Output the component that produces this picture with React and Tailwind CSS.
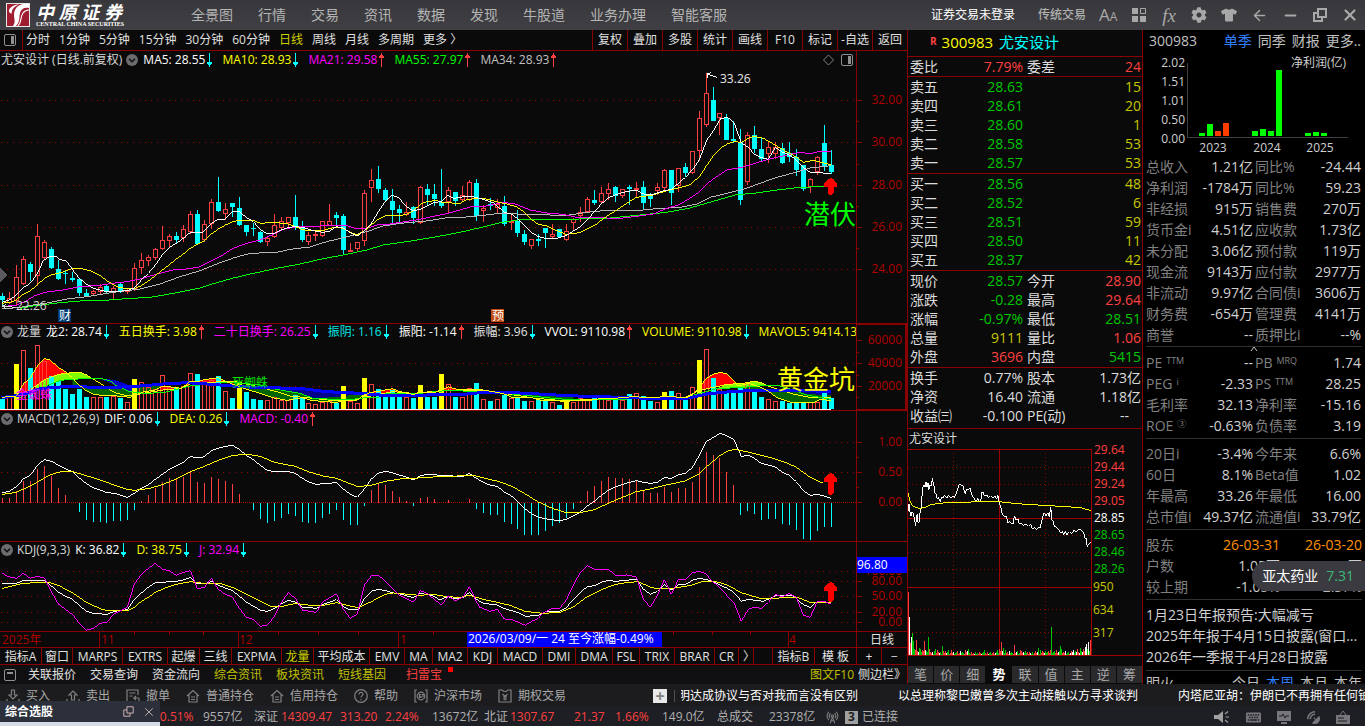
import React from "react";
import { FaCog, FaTshirt, FaKeyboard, FaSatelliteDish } from "react-icons/fa";
import { ArrowLeft, Minus, X, RadioTower } from "lucide-react";

/* ---------- data ---------- */

// kind, high, body top, body bottom, low
const CANDLES = `d 700 708 720 735;u 697 714 730 732;u 616 651 724 735;u 588 597 672 676;d 606 612 636 664;u 492 528 650 680;u 540 546 594 600;d 561 567 624 628;d 600 627 657 660;d 630 640 644 672;d 638 655 660 666;d 655 657 699 708;d 687 699 710 712;u 690 694 702 706;u 672 682 696 702;d 672 678 697 700;u 680 684 696 720;d 670 672 697 700;u 685 690 696 702;u 609 625 690 693;u 580 601 626 644;u 585 591 605 618;u 564 568 594 602;u 498 541 569 570;u 522 528 543 562;d 516 528 540 550;u 495 507 536 548;u 453 462 516 522;d 450 462 552 554;u 480 492 540 546;u 417 426 494 507;d 351 426 453 456;u 430 447 462 480;d 429 430 441 471;d 411 444 495 500;d 495 495 516 528;d 489 504 507 528;d 513 516 546 550;u 528 534 546 560;u 462 495 533 534;u 471 484 504 510;u 471 472 490 502;d 405 471 500 510;d 483 499 540 546;u 516 525 546 556;u 513 524 528 543;u 484 484 528 532;u 432 484 498 498;d 456 465 474 495;d 462 468 570 582;u 550 570 573 576;u 546 547 567 576;u 390 399 544 558;u 327 360 384 426;d 318 357 387 399;d 384 390 420 423;d 387 423 450 492;d 435 447 459 487;u 426 457 466 468;d 440 441 474 492;u 378 382 490 492;d 372 387 405 438;d 372 404 417 438;d 327 426 438 444;u 382 391 428 460;d 396 398 423 438;u 378 407 422 424;u 360 366 422 424;d 357 369 468 483;u 435 444 453 486;d 414 434 440 450;u 418 432 446 459;d 408 438 492 498;u 465 484 490 510;d 450 483 521 531;d 510 522 548 555;u 538 538 560 567;d 522 537 543 558;d 504 504 521 564;u 492 522 533 534;d 507 507 531 534;u 492 514 542 543;u 474 478 490 510;u 441 457 470 486;u 411 418 457 459;d 390 420 429 435;u 381 400 428 432;u 369 387 402 420;d 378 381 408 426;u 387 388 410 414;d 375 381 387 435;u 366 384 390 414;d 363 381 429 447;d 399 402 417 441;u 369 381 395 405;u 328 331 384 390;d 330 330 399 435;u 324 325 378 396;d 309 321 339 351;u 273 274 340 342;u 153 175 274 303;u 40 100 196 201;d 81 120 183 183;u 159 160 174 225;d 162 174 240 240;d 183 237 244 250;d 207 246 420 435;u 216 226 367 375;d 198 225 267 279;d 231 267 297 303;u 246 262 284 309;u 246 262 284 297;d 250 264 309 312;d 246 280 291 306;d 267 291 330 348;d 315 315 387 393;u 354 358 382 399;u 288 292 338 345;d 195 249 318 333;d 270 315 336 342`
  .split(";")
  .map((row) => {
    const [kind, ...v] = row.split(" ");
    return { kind, v: v.map(Number) };
  });

const VOLUMES =
  "c267 r262 y162 r121 c174 r106 r153 c200 c213 c237 c252 c237 c261 r262 r262 c263 r258 c265 r277 y207 r217 r232 r238 r196 r232 c236 r230 r190 c192 r214 r210 c198 r243 c264 y218 c246 c267 c270 r271 r262 r271 r271 c255 c265 r280 r283 r277 r275 c279 y228 r274 r280 y204 r223 c237 c258 c240 c262 r262 c265 y225 c262 c263 y192 r223 c263 r262 r236 c219 r268 c273 r268 c256 r266 c266 c273 r275 c270 c270 r278 c285 y267 r278 r266 r268 c262 r268 r270 c268 r272 c252 r250 c258 c273 r278 y246 c243 r250 c268 r232 y150 r118 c204 r238 c250 c250 c233 r220 c243 c261 r268 r273 c273 c279 c279 c279 r278 r278 c249 c264".split(" ");

const MACD_BARS = [
  565, 565, 544, 514, 514, 477, 468, 499, 535, 556, 577, 603, 627, 633, 633, 636, 630, 630, 627, 597, 573, 556, 535, 516, 504, 507, 501, 486, 516, 519, 501, 507, 514, 522, 552, 577, 597, 624, 636, 630, 621, 609, 615, 633, 636, 636, 621, 609, 597, 627, 642, 642, 585, 540, 523, 525, 544, 562, 573, 585, 565, 562, 568, 577, 571, 577, 577, 567, 594, 606, 612, 612, 633, 639, 654, 672, 674, 672, 660, 645, 636, 621, 594, 573, 544, 529, 514, 501, 504, 504, 507, 514, 540, 550, 550, 531, 547, 534, 534, 517, 472, 427, 436, 444, 487, 526, 612, 600, 609, 627, 624, 624, 639, 642, 657, 684, 687, 660, 648, 648,
];

const MA5 = "7,727 28,720 49,705 70,683 91,670 112,640 130,602 148,590 165,588 180,598 200,604 220,632 238,655 259,672 280,685 301,690 322,696 350,694 380,692 403,684 424,660 445,640 466,615 487,585 508,562 529,550 550,535 571,517 610,516 634,490 655,478 676,477 697,455 718,455 739,472 760,485 781,508 802,522 823,520 844,510 865,502 886,500 910,502 940,512 967,517 988,514 1009,500 1030,504 1051,518 1072,528 1093,512 1114,490 1135,455 1156,424 1177,405 1198,415 1219,440 1240,453 1261,448 1282,437 1303,427 1324,425 1342,406 1360,415 1408,408 1450,418 1480,428 1513,457 1534,462 1555,478 1576,500 1597,519 1615,530 1636,535 1670,535 1699,527 1720,513 1741,500 1762,480 1783,455 1804,432 1825,413 1846,405 1880,394 1909,391 1930,402 1960,403 1985,394 2014,388 2035,370 2056,352 2077,330 2098,300 2119,243 2140,212 2161,177 2182,172 2203,188 2212,215 2224,248 2245,262 2263,283 2284,293 2305,298 2326,262 2347,276 2368,285 2389,300 2410,322 2431,337 2452,336 2473,340 2494,341";
const MA10 = "7,730 40,725 70,703 91,692 112,675 133,655 154,645 185,637 217,625 245,626 270,632 301,647 322,663 350,680 380,686 403,686 424,677 445,663 466,647 487,630 508,614 529,597 550,582 571,565 592,553 613,542 634,522 655,507 676,495 697,486 718,481 760,481 781,490 823,487 865,492 886,500 907,508 930,513 967,513 988,506 1012,501 1030,506 1051,517 1072,524 1093,513 1114,494 1135,478 1156,467 1198,467 1219,463 1240,453 1261,433 1282,424 1310,422 1330,428 1380,430 1400,418 1450,415 1490,425 1520,432 1550,440 1576,459 1597,480 1615,493 1640,498 1670,512 1699,523 1740,518 1765,505 1790,492 1815,472 1846,453 1880,430 1909,412 1960,405 2000,392 2040,383 2070,374 2098,350 2119,318 2140,288 2161,265 2182,252 2203,244 2224,248 2245,235 2263,229 2290,235 2310,246 2340,264 2368,280 2389,291 2410,307 2440,301 2470,308 2494,315";
const MA21 = "7,740 50,735 80,722 105,707 140,696 190,690 240,680 300,676 345,669 380,665 430,655 470,642 520,630 560,627 597,621 630,605 660,590 697,566 740,550 780,540 822,522 850,508 890,500 950,499 985,495 1040,497 1065,505 1100,505 1130,495 1170,492 1215,485 1260,478 1305,468 1345,460 1380,450 1410,441 1460,438 1510,427 1545,432 1590,450 1640,459 1690,463 1730,472 1780,473 1860,475 1910,469 1960,462 2000,445 2035,435 2070,415 2098,396 2119,373 2150,350 2180,330 2230,321 2280,305 2330,292 2370,283 2400,277 2430,281 2460,274 2494,274";
const MA34 = "7,747 60,742 100,735 140,729 200,717 260,710 340,697 420,687 480,672 540,650 600,632 650,612 700,594 750,580 830,577 870,568 930,561 980,545 1030,533 1100,515 1150,498 1200,490 1280,483 1340,473 1400,471 1450,466 1500,460 1600,464 1700,466 1760,457 1800,453 1900,453 1960,447 2040,442 2090,432 2130,412 2180,400 2230,388 2280,370 2330,352 2380,339 2430,324 2494,317";
const MA55 = "60,745 100,738 180,728 240,723 300,722 380,716 450,712 520,700 600,684 640,671 700,654 760,640 830,625 900,612 960,598 1040,583 1100,570 1150,555 1220,545 1300,532 1380,517 1440,503 1500,488 1560,479 1640,478 1740,477 1830,474 1920,465 2000,457 2070,444 2140,424 2210,404 2260,400 2340,389 2400,382 2494,379";

const DIF = "7,548 28,544 49,530 70,507 91,496 112,466 133,449 154,454 175,465 196,476 217,485 238,504 259,521 280,533 301,540 319,547 350,552 382,562 403,550 424,535 445,524 466,508 487,493 508,478 529,468 550,457 571,439 592,444 613,440 634,422 655,415 676,409 697,406 718,418 739,436 760,449 781,466 802,481 823,485 865,485 886,490 907,505 928,517 949,523 1009,518 1030,537 1051,553 1072,562 1093,537 1114,507 1135,490 1156,484 1177,488 1198,495 1219,501 1240,510 1261,497 1285,493 1310,495 1345,496 1366,499 1390,499 1408,490 1429,505 1450,517 1471,526 1492,529 1513,546 1534,558 1555,576 1576,597 1597,613 1615,622 1640,627 1678,632 1699,628 1720,618 1741,606 1762,588 1783,574 1804,556 1825,541 1846,531 1867,523 1909,512 1930,517 1951,520 1972,517 1993,503 2014,505 2035,494 2056,490 2077,473 2098,436 2119,395 2140,382 2161,370 2182,378 2203,390 2212,412 2224,439 2245,436 2263,445 2284,460 2326,471 2347,487 2368,496 2389,515 2410,542 2431,556 2452,553 2473,558 2494,565";
const DEA = "7,553 49,547 91,528 133,504 154,493 185,485 217,485 259,497 301,510 350,528 382,538 403,541 445,536 487,524 529,507 571,485 613,469 655,451 697,437 739,432 781,439 823,457 886,469 928,486 970,498 1009,505 1040,517 1072,529 1110,527 1156,514 1200,507 1240,505 1300,501 1420,496 1460,506 1490,513 1534,528 1576,552 1615,576 1657,595 1699,608 1741,608 1783,599 1825,580 1867,562 1909,545 1951,537 1993,526 2056,513 2098,491 2119,471 2140,453 2161,436 2182,424 2203,418 2240,425 2284,436 2326,447 2368,462 2389,472 2431,502 2470,520";

const K_LINE = "7,130 50,130 70,121 133,121 150,134 175,157 196,168 217,178 238,196 259,214 280,220 320,223 345,214 382,209 403,178 424,159 445,142 466,128 529,124 550,120 571,113 592,132 613,132 634,124 655,136 697,152 718,168 739,187 760,198 781,211 802,214 823,206 844,192 865,181 886,186 907,201 949,205 970,193 1009,179 1030,200 1051,210 1075,210 1093,175 1114,154 1135,148 1156,152 1177,158 1200,162 1240,173 1261,160 1300,168 1320,180 1342,170 1365,176 1390,172 1408,157 1429,178 1450,190 1492,195 1513,206 1555,218 1576,229 1615,226 1636,216 1680,213 1699,203 1720,178 1741,157 1762,140 1783,137 1804,127 1825,121 1846,124 1910,118 1930,147 1951,163 1972,154 1993,133 2014,150 2035,134 2056,134 2077,121 2098,115 2130,121 2161,136 2182,145 2203,158 2224,184 2245,178 2290,184 2326,168 2380,168 2410,194 2431,202 2452,184 2494,190";
const D_LINE = "7,145 60,132 110,127 145,126 175,136 217,158 259,187 301,206 320,212 385,211 403,202 424,184 445,172 466,157 500,142 530,133 571,125 610,130 660,130 697,142 739,162 781,184 810,198 845,200 886,190 930,196 970,196 1009,188 1050,198 1075,203 1114,185 1156,163 1180,159 1260,166 1300,163 1340,170 1380,172 1408,166 1450,178 1492,187 1530,196 1576,214 1630,220 1680,217 1720,201 1762,170 1804,149 1846,133 1880,128 1915,125 1950,141 1972,146 2020,145 2077,135 2110,124 2145,124 2182,135 2224,158 2280,175 2320,175 2389,171 2431,187 2494,187";
const J_LINE = "7,100 25,110 49,115 70,100 91,115 112,109 133,114 154,155 175,192 196,208 217,223 238,250 259,271 280,265 301,250 320,246 345,220 382,202 403,132 424,103 445,85 466,70 487,88 508,92 529,106 550,97 571,92 592,145 613,143 634,115 655,148 676,163 697,171 718,205 739,232 760,238 781,259 802,255 823,230 844,188 865,158 886,175 907,210 949,217 967,187 1009,161 1030,208 1051,235 1072,222 1093,136 1114,108 1135,106 1156,123 1177,146 1198,166 1240,187 1261,152 1282,160 1300,176 1324,195 1345,168 1366,182 1390,170 1408,140 1429,184 1438,201 1471,214 1492,208 1513,237 1534,238 1576,256 1597,243 1615,235 1630,218 1655,206 1678,206 1699,180 1720,135 1741,98 1762,76 1783,88 1828,90 1846,106 1880,105 1909,111 1930,177 1951,202 1972,166 1993,119 2014,163 2035,119 2056,118 2077,98 2098,94 2119,102 2130,118 2160,143 2182,168 2203,190 2224,244 2245,208 2263,202 2284,205 2305,187 2326,163 2347,170 2368,160 2389,172 2410,225 2431,232 2452,184 2473,184 2494,193";

const V_FAST = "5,262 50,258 70,222 90,205 112,168 133,146 150,150 175,172 200,188 217,203 238,226 259,242 280,252 301,256 350,258 390,262 403,257 430,246 466,240 490,228 520,232 545,235 571,213 592,216 613,209 655,203 676,214 697,222 718,230 740,238 781,250 823,264 860,271 907,263 930,270 970,275 1010,277 1030,271 1072,271 1085,258 1110,248 1135,244 1177,236 1198,244 1240,254 1261,247 1303,248 1324,240 1345,230 1366,237 1400,240 1450,240 1480,245 1513,252 1540,264 1590,262 1620,270 1699,274 1760,268 1830,266 1900,260 1950,263 2010,259 2056,264 2077,255 2098,232 2119,205 2140,193 2161,187 2182,192 2203,215 2215,228 2245,220 2262,225 2284,232 2305,244 2330,262 2368,276 2410,278 2440,278 2460,268 2494,272";
const V_SLOW = "50,258 90,240 133,210 154,200 190,190 240,187 260,195 280,208 301,220 322,235 350,250 385,258 430,250 490,240 540,236 571,222 650,216 697,213 739,222 781,232 830,245 870,258 930,264 1000,272 1072,268 1114,258 1177,245 1240,250 1303,244 1345,240 1450,242 1510,250 1600,264 1699,273 1830,268 1950,262 2056,262 2098,242 2140,232 2182,223 2230,220 2262,214 2284,218 2305,228 2340,240 2380,252 2430,262 2494,262";
const V_GREEN = "60,262 100,245 133,230 170,215 200,208 301,205 330,212 350,228 390,245 430,250 490,248 571,228 640,220 700,217 780,225 830,238 900,250 940,265 1040,270 1090,264 1135,262 1160,250 1240,252 1345,241 1480,247 1560,254 1650,264 1720,270 1860,268 1990,262 2060,262 2100,250 2150,236 2230,232 2290,226 2340,228 2380,240 2420,255 2494,268";
const V_BLUE = "5,263 50,257 90,247 120,236 160,232 220,229 280,232 350,232 420,228 490,222 560,218 620,222 700,228 780,233 900,235 980,245 1080,250 1150,256 1240,258 1310,253 1380,254 1450,247 1520,247 1600,251 1700,257 1800,260 1900,263 1980,267 2060,265 2120,252 2180,246 2260,241 2340,241 2400,242 2494,244";

const candleX = (i) => Math.floor(2.49 + i * 6.966);
const px = (v) => Math.floor(v / 3);

/* ---------- small parts ---------- */

function Trend({ up }) {
  return up ? (
    <svg width="5" height="14" className="shrink-0" shapeRendering="crispEdges">
      <path d="M2 0h1v14h-1zM1 2h3v1h-3zM0 3h5v2h-5z" fill="#ff4040" />
    </svg>
  ) : (
    <svg width="5" height="14" className="shrink-0" shapeRendering="crispEdges">
      <path d="M2 0h1v14h-1zM0 9h5v2h-5zM1 11h3v1h-3z" fill="#00ffff" />
    </svg>
  );
}

function Chevron() {
  return (
    <button type="button" aria-label="指标菜单" className="flex shrink-0">
      <svg width="12" height="12">
        <circle cx="6" cy="6" r="6" fill="#6c6c70" />
        <path d="M3 4.7l3 3 3-3" fill="none" stroke="#111" strokeWidth="1.6" />
      </svg>
    </button>
  );
}

function Legend({ title, items, chevronFirst }) {
  return (
    <div className={`z-10 flex items-center self-start overflow-hidden whitespace-nowrap pl-px text-xs leading-4 ${chevronFirst ? "h-4" : "h-[18px]"}`}>
      <span className="mr-[5px] flex shrink-0 items-center gap-1 text-[#d8d8d8]">
        {chevronFirst && <Chevron />}
        {title}
        {!chevronFirst && <Chevron />}
      </span>
      <span className="flex items-center gap-[10px]">
        {items.map(([text, color, up]) => (
          <span key={text} className={`flex shrink-0 items-center gap-0.5 ${color}`}>
            {text}
            <Trend up={up} />
          </span>
        ))}
      </span>
    </div>
  );
}

const Grid = ({ ys }) =>
  ys.map((y) => (
    <line key={y} x1="1" x2="100%" y1={y + 0.5} y2={y + 0.5} stroke="#a00000" strokeDasharray="1 5" />
  ));

const Line = ({ points, color, width = 3 }) => (
  <polyline points={points} fill="none" stroke={color} strokeWidth={width} />
);

const Signal = ({ x, y, h }) => (
  <path
    d={`M${x} ${y}l3 1.5 3.5 4v3.5h-3.5v${h - 11}l-1.5 2h-3l-1.5 -2v-${h - 11}h-3.5v-3.5l3.5 -4z`}
    fill="#ff0000"
  />
);

function Axis({ ticks, minor = [], children, className = "" }) {
  return (
    <svg className={`h-full w-[51px] shrink-0 border-l border-[#8b0000] font-[inherit] ${className}`} role="img" aria-label="坐标轴">
      {ticks.map(([y, label]) => (
        <g key={label}>
          <line x1="0" x2="5" y1={y + 0.5} y2={y + 0.5} stroke="#8b0000" />
          <text x="45" y={y + 4} textAnchor="end" fontSize="12" fill="#b00000">
            {label}
          </text>
        </g>
      ))}
      {minor.map((y) => (
        <line key={y} x1="0" x2="2" y1={y + 0.5} y2={y + 0.5} stroke="#8b0000" />
      ))}
      {children}
    </svg>
  );
}

const plot = "grid min-w-0 flex-1 overflow-hidden [&>*]:col-start-1 [&>*]:row-start-1";

/* ---------- charts ---------- */

function PriceChart() {
  return (
    <section className="flex min-h-[272px] flex-1">
      <div className={plot}>
        <svg className="h-full w-full" shapeRendering="crispEdges" role="img" aria-label="日线K线图">
          <Grid ys={[49, 91, 134, 176, 218]} />
          {CANDLES.map(({ kind, v }, i) => {
            const [hi, top, bottom, lo] = v.map((n) => px(n) + 9);
            const x = candleX(i);
            const h = Math.max(1, bottom - top);
            return kind === "d" ? (
              <g key={i} fill="#00ffff">
                <rect x={x} y={hi} width="1" height={lo - hi} />
                <rect x={x - 2} y={top} width="5" height={h} />
              </g>
            ) : (
              <g key={i} fill="#ff4040">
                <rect x={x} y={hi} width="1" height={Math.max(0, top - hi)} />
                <rect x={x} y={bottom} width="1" height={Math.max(0, lo - bottom)} />
                <rect x={x - 1.5} y={top + 0.5} width="4" height={Math.max(0.5, h - 1)} fill="#0a0a0a" stroke="#ff4040" />
              </g>
            );
          })}
          <g transform="translate(0 9) scale(0.33333)">
            <Line points={MA55} color="#00ff00" />
            <Line points={MA34} color="#b8b8b8" />
            <Line points={MA21} color="#ff00ff" />
            <Line points={MA10} color="#ffff00" />
            <Line points={MA5} color="#ffffff" />
            <Line points="2152,52 2122,42" color="#fff" />
            <Line points="2122,42 2133,38" color="#fff" />
            <Line points="2122,42 2124,54" color="#fff" />
            <Line points="45,742 7,738 18,733" color="#ddd" />
            <Line points="7,738 18,747" color="#ddd" />
          </g>
          <path d="M0 217l7 7-7 7z" fill="#5a5a5e" />
          <Signal x={830.5} y={127} h={17} />
          <text x="16" y="259" fontSize="12" fill="#d8d8d8">22.26</text>
          <text x="720" y="32" fontSize="12" fill="#e8e8e8">33.26</text>
          <text x="804" y="173" fontSize="26" fill="#00ff00">潜伏</text>
          <rect x="58" y="258" width="13" height="13" fill="#003a75" />
          <text x="59" y="269" fontSize="12" fill="#fff">财</text>
          <rect x="491" y="258" width="13" height="13" fill="#c04a10" />
          <text x="492" y="269" fontSize="12" fill="#fff">预</text>
        </svg>
        <div className="z-10 flex items-start justify-between self-start overflow-hidden pr-[3px]">
          <Legend
            title="尤安设计 (日线.前复权)"
            items={[
              ["MA5: 28.55", "text-white", false],
              ["MA10: 28.93", "text-[#ffff00]", false],
              ["MA21: 29.58", "text-[#ff00ff]", true],
              ["MA55: 27.97", "text-[#00ff00]", true],
              ["MA34: 28.93", "text-[#c0c0c0]", true],
            ]}
          />
          <div className="flex items-center gap-[7px] pt-[3px]">
            <svg width="11" height="12">
              <path d="M5.5 1l5 5-5 5-5-5z" fill="none" stroke="#808080" />
            </svg>
            <SplitIcon />
          </div>
        </div>
      </div>
      <Axis
        ticks={[[49, "32.00"], [91, "30.00"], [134, "28.00"], [176, "26.00"], [218, "24.00"]]}
        minor={[70, 113, 155, 197]}
      />
    </section>
  );
}

function SplitIcon() {
  return (
    <svg width="12" height="12" className="shrink-0">
      <rect x="0.5" y="0.5" width="11" height="11" rx="1.5" fill="none" stroke="#909090" />
      <rect x="7" y="2" width="3" height="8" fill="#909090" />
    </svg>
  );
}

function VolumeChart() {
  const close = (a, b) => `${a} ${b.split(" ").reverse().join(" ")}`;
  return (
    <section className="flex h-[87px] shrink-0 border-t border-[#8b0000]">
      <div className={plot}>
        <svg className="h-full w-full" shapeRendering="crispEdges" role="img" aria-label="成交量">
          <Grid ys={[39, 62]} />
          <defs>
            <clipPath id="hot">
              <path d="M50 0H217V300H50zM480 0H700V300H480zM1100 0H1245V300H1100zM1300 0H1380V300H1300zM2070 0H2212V300H2070z" />
            </clipPath>
            <clipPath id="cool">
              <path d="M217 0H480V300H217zM700 0H1100V300H700zM1500 0H1720V300H1500zM2212 0H2500V300H2212z" />
            </clipPath>
          </defs>
          <g transform="translate(0 -14) scale(0.33333)">
            <g clipPath="url(#hot)">
              <polygon points={close(V_FAST, V_SLOW)} fill="#ff0000" />
            </g>
            <g clipPath="url(#cool)">
              <polygon points={close(V_FAST, V_BLUE)} fill="#006400" />
            </g>
            <polygon points="100,236 133,210 154,200 190,190 240,187 260,195 275,205 200,208 170,215 130,230" fill="#80ff00" />
            <polygon points="2150,236 2182,223 2230,220 2262,214 2284,218 2300,226 2230,232" fill="#80ff00" />
            <polygon points="301,206 345,210 400,230 410,245 390,245 350,228" fill="#0000c8" />
            <polygon points="780,226 870,232 980,245 1080,252 1000,262 940,264 900,250" fill="#00008b" />
            <polygon points="2340,230 2400,242 2494,246 2494,256 2420,252 2380,240" fill="#00008b" />
          </g>
          {VOLUMES.map((s, i) => {
            const top = px(Number(s.slice(1))) - 14;
            const x = candleX(i);
            if (s[0] === "r")
              return <rect key={i} x={x - 1.5} y={top + 0.5} width="4" height={86 - top} fill="none" stroke="#ff4040" />;
            return <rect key={i} x={x - 2} y={top} width="5" height={85 - top} fill={s[0] === "c" ? "#00ffff" : "#ffff00"} />;
          })}
          <g transform="translate(0 -14) scale(0.33333)">
            <Line points={V_SLOW} color="#ffff00" />
            <Line points={V_GREEN} color="#00ff00" />
            <Line points={V_BLUE} color="#0000ff" width={9} />
            <Line points={V_FAST} color="#ffff00" />
          </g>
          <rect x="0" y="85" width="831" height="1" fill="#fff" />
          <text x="16" y="75" fontSize="12" fill="#ff00ff">金蜘蛛</text>
          <text x="232" y="63" fontSize="12" fill="#00e000">死蜘蛛</text>
          <text x="777" y="65" fontSize="26" fill="#ffff00">黄金坑</text>
        </svg>
        <Legend
          chevronFirst
          title="龙量"
          items={[
            ["龙2: 28.74", "text-white", false],
            ["五日换手: 3.98", "text-[#ffff00]", true],
            ["二十日换手: 26.25", "text-[#ff00ff]", false],
            ["振阴: 1.16", "text-[#00e8e8]", false],
            ["振阳: -1.14", "text-white", true],
            ["振幅: 3.96", "text-[#e0e0e0]", false],
            ["VVOL: 9110.98", "text-white", true],
            ["VOLUME: 9110.98", "text-[#ffff00]", false],
            ["MAVOL5: 9414.13", "text-[#ffff00]", false],
          ]}
        />
      </div>
      <Axis ticks={[[15, "60000"], [38, "40000"], [61, "20000"]]} minor={[27, 50, 72]} className="border border-r-2" />
    </section>
  );
}

function MacdChart() {
  return (
    <section className="flex h-[131px] shrink-0 border-t border-[#8b0000]">
      <div className={plot}>
        <svg className="h-full w-full" shapeRendering="crispEdges" role="img" aria-label="MACD">
          <Grid ys={[31, 61]} />
          <line x1="1" x2="100%" y1="91.5" y2="91.5" stroke="#b00000" strokeDasharray="1 1" />
          {MACD_BARS.map((v, i) => {
            const y = px(v) - 101;
            return y < 91 ? (
              <rect key={i} x={candleX(i)} y={y} width="1" height={92 - y} fill="#ff4040" />
            ) : (
              <rect key={i} x={candleX(i)} y="92" width="1" height={y - 91} fill="#00ffff" />
            );
          })}
          <g transform="translate(0 -101) scale(0.33333)">
            <Line points={DIF} color="#ffffff" />
            <Line points={DEA} color="#ffff00" />
          </g>
          <Signal x={830.5} y={62} h={22} />
        </svg>
        <Legend
          chevronFirst
          title="MACD(12,26,9)"
          items={[
            ["DIF: 0.06", "text-white", false],
            ["DEA: 0.26", "text-[#ffff00]", false],
            ["MACD: -0.40", "text-[#ff00ff]", true],
          ]}
        />
      </div>
      <Axis ticks={[[31, "1.00"], [61, "0.50"], [91, "0.00"]]} minor={[46, 76]} />
    </section>
  );
}

function KdjChart() {
  return (
    <section className="flex h-[90px] shrink-0 border-t border-[#8b0000]">
      <div className={plot}>
        <svg className="h-full w-full" shapeRendering="crispEdges" role="img" aria-label="KDJ">
          <Grid ys={[29, 39, 54, 70, 80]} />
          <g transform="translate(0 -2) scale(0.33333)">
            <Line points={K_LINE} color="#ffffff" />
            <Line points={D_LINE} color="#ffff00" />
            <Line points={J_LINE} color="#ff00ff" />
          </g>
          <Signal x={830.5} y={40} h={20} />
        </svg>
        <Legend
          chevronFirst
          title="KDJ(9,3,3)"
          items={[
            ["K: 36.82", "text-white", false],
            ["D: 38.75", "text-[#ffff00]", false],
            ["J: 32.94", "text-[#ff00ff]", false],
          ]}
        />
      </div>
      <Axis ticks={[[29, "100.00"], [39, "80.00"], [54, "50.00"], [70, "20.00"], [80, "0.00"]]}>
        <rect x="0" y="15" width="50" height="16" fill="#0000ff" />
        <text x="0" y="27" fontSize="12" fill="#fff">96.80</text>
      </Axis>
    </section>
  );
}

function TimeAxis() {
  return (
    <div className="flex h-4 shrink-0 border-t border-[#8b0000] text-xs">
      <svg className="h-full min-w-0 flex-1">
        {[99, 238, 398, 788].map((x) => (
          <line key={x} x1={x + 0.5} x2={x + 0.5} y1="0" y2="15" stroke="#8b0000" />
        ))}
        {[134, 169, 203, 278, 318, 358, 433, 673, 712, 750].map((x) => (
          <line key={x} x1={x + 0.5} x2={x + 0.5} y1="0" y2="3" stroke="#8b0000" />
        ))}
        <g fontSize="12" fill="#b00000">
          <text x="2" y="12">2025年</text>
          <text x="101" y="12">11</text>
          <text x="239" y="12">12</text>
          <text x="400" y="12">1</text>
          <text x="789" y="12">4</text>
        </g>
        <rect x="467" y="0" width="195" height="15" fill="#0000ff" />
        <text x="468" y="11" fontSize="12" fill="#fff">2026/03/09/一 24 至今涨幅-0.49%</text>
      </svg>
      <div className="w-[51px] border-l border-[#8b0000] text-center leading-[15px] text-[#e0e0e0]">日线</div>
    </div>
  );
}

/* ---------- left column bars ---------- */

const PERIODS = ["分时", "1分钟", "5分钟", "15分钟", "30分钟", "60分钟", "日线", "周线", "月线", "多周期", "更多 〉"];
const TOOLS = ["复权", "叠加", "多股", "统计", "画线", "F10", "标记", "-自选", "返回"];

function Toolbar() {
  return (
    <div className="flex h-[21px] shrink-0 items-stretch border-b border-[#8b0000] text-xs text-[#e0e0e0]">
      <button type="button" aria-label="侧栏" className="flex w-[23px] items-center border-r border-[#8b0000] pl-1">
        <SplitIcon />
      </button>
      <div className="flex flex-1 items-center gap-[9px] whitespace-nowrap pl-[3px]">
        {PERIODS.map((p) => (
          <button key={p} type="button" className={p === "日线" ? "text-[#d0d000]" : ""}>
            {p}
          </button>
        ))}
      </div>
      {TOOLS.map((t) => (
        <button key={t} type="button" className="w-[35px] whitespace-nowrap border-l border-[#8b0000] text-center">
          {t}
        </button>
      ))}
    </div>
  );
}

const INDICATORS = [
  ["指标A", "w-[42px]"], ["窗口", "w-[31px]"], ["MARPS", "w-[50px]"], ["EXTRS", "w-[45px]"], ["起爆", "w-[32px]"],
  ["三线", "w-[32px]"], ["EXPMA", "w-[50px]"], ["龙量", "w-[32px]"], ["平均成本", "w-[56px]"], ["EMV", "w-[35px]"],
  ["MA", "w-[28px]"], ["MA2", "w-[35px]"], ["KDJ", "w-[30px]"], ["MACD", "w-[45px]"], ["DMI", "w-[33px]"],
  ["DMA", "w-[37px]"], ["FSL", "w-[27px]"], ["TRIX", "w-[35px]"], ["BRAR", "w-[40px]"], ["CR", "w-[24px]"],
];

function IndicatorTabs() {
  const cell = "shrink-0 whitespace-nowrap border-r border-[#8b0000] text-center";
  return (
    <div className="flex h-[18px] shrink-0 border-y border-[#8b0000] text-xs leading-[18px] text-[#e0e0e0]">
      {INDICATORS.map(([name, w]) => (
        <button key={name} type="button" className={`${cell} ${w} ${name === "龙量" ? "text-[#d0d000]" : ""}`}>
          {name}
        </button>
      ))}
      <button type="button" className="w-[15px] shrink-0 overflow-hidden border-r border-[#8b0000] pl-1">〉</button>
      <span className="flex-1 border-r border-[#8b0000]" />
      <button type="button" className={`${cell} w-[42px]`}>指标B</button>
      <button type="button" className={`${cell} w-[42px]`}>模 板</button>
      <button type="button" className={`${cell} w-[25px]`}>+</button>
      <button type="button" className="w-[25px] shrink-0">−</button>
    </div>
  );
}

const LINKS = [
  ["关联报价", ""], ["交易查询", ""], ["资金流向", ""], ["综合资讯", "text-[#c0c000]"], ["板块资讯", "text-[#c0c000]"], ["短线基因", "text-[#c0c000]"],
];

function LinkBar() {
  return (
    <div className="flex h-[19px] shrink-0 items-center bg-[#101012] pl-1 pr-1 text-xs text-[#e0e0e0]">
      <svg width="12" height="12" className="mr-3">
        <rect x="0.5" y="0.5" width="11" height="11" rx="1.5" fill="none" stroke="#909090" />
        <path d="M3 4h6" stroke="#909090" strokeWidth="2" />
      </svg>
      <div className="flex flex-1 items-center gap-[14px]">
        {LINKS.map(([t, c]) => (
          <button key={t} type="button" className={c}>{t}</button>
        ))}
        <button type="button" className="ml-[6px] flex items-start gap-[6px] text-[#ff4040]">
          扫雷宝
          <span className="size-[5px] bg-[#ff0000]" />
        </button>
      </div>
      <button type="button" className="mr-1 text-[#c0c000]">图文F10</button>
      <button type="button" className="w-[45px] overflow-hidden whitespace-nowrap text-left">侧边栏》</button>
    </div>
  );
}

/* ---------- quote column ---------- */

const W = "text-[#dcdcdc]", G = "text-[#00c800]", R = "text-[#ff4040]", Y = "text-[#c8c800]";

function QuoteTable({ rows, className = "pb-px" }) {
  return (
    <div className={`shrink-0 border-b border-[#8b0000] ${className}`}>
      <table className="w-full table-fixed text-sm leading-[19px]">
        <colgroup>
          <col className="w-[46px]" />
          <col className="w-[69px]" />
          <col className="w-[50px]" />
          <col />
        </colgroup>
        <tbody className="whitespace-nowrap">
          {rows.map((r) => (
            <tr key={r[0]} className="h-[19px]">
              <th scope="row" className="p-0 pl-0.5 text-left font-normal text-[#dcdcdc]">{r[0]}</th>
              <td className={`p-0 text-right ${r[2]}`}>{r[1]}</td>
              <td className="p-0 pl-1 text-[#dcdcdc]">{r[3]}</td>
              <td className={`p-0 pr-px text-right ${r[5]}`}>{r[4]}</td>
            </tr>
          ))}
        </tbody>
      </table>
    </div>
  );
}

const INTRADAY = "24,258 27,238 30,262 33,272 36,262 40,265 43,280 47,303 50,270 52,268 54,290 57,292 61,255 64,250 66,215 68,190 72,180 75,186 78,172 81,186 84,175 86,195 90,180 94,184 97,160 100,178 103,185 105,205 108,208 112,222 115,216 121,230 124,216 130,218 134,210 140,220 146,210 152,220 158,212 163,218 168,206 172,196 178,176 184,182 190,182 193,202 196,206 200,192 206,194 210,190 214,205 219,216 223,222 228,229 233,220 238,232 243,222 245,202 249,202 254,214 260,210 266,218 272,212 278,218 285,214 290,222 293,210 298,232 303,250 307,268 314,274 320,274 323,295 329,290 335,298 340,296 343,272 348,284 354,282 358,296 365,294 370,302 378,296 386,304 392,298 397,312 404,308 410,314 416,306 420,310 425,288 432,264 438,272 445,264 448,276 452,246 456,285 460,290 463,303 470,308 478,315 482,325 488,320 490,330 496,318 500,330 508,320 514,326 522,316 530,320 536,312 545,316 550,322 555,338 558,340 562,365 566,356 572,352";
const AVERAGE = "24,203 30,228 38,243 55,250 75,248 95,238 130,234 240,230 298,230 350,236 430,241 500,245 545,249 574,257";
const TICK_VOLUMES = [63, 38, 12, 18, 22, 14, 6, 5, 15, 4, 3, 7, 6, 3, 5, 4, 14, 5, 4, 3, 18, 6, 3, 2, 3, 1, 4, 6, 2, 5, 3, 2, 3, 1, 9, 4, 2, 4, 2, 3, 5, 1, 2, 5, 2, 3, 1, 2, 3, 4, 1, 2, 4, 2, 3, 2, 1, 5, 3, 4, 6, 2, 1, 3, 1, 2, 1, 3, 1, 2, 1, 3, 2, 1, 2, 3, 5, 2, 1, 3, 1, 2, 3, 1, 2, 3, 1, 2, 3, 5, 2, 6, 4, 13, 4, 7, 2, 5, 2, 3, 1, 4, 2, 3, 2, 1, 10, 2, 3, 4, 1, 2, 5, 4, 2, 3, 2, 4, 2, 3, 1, 3, 2, 1, 3, 1, 2, 4, 2, 3, 7, 1, 5, 2, 4, 3, 2, 4, 2, 3, 4, 2, 5, 28, 2, 3, 4, 2, 5, 2, 3, 4, 9, 6, 2, 3, 2, 4, 1, 2, 3, 1, 2, 4, 3, 5, 2, 4, 3, 6, 3, 2, 7, 4, 3, 6, 4, 8, 11, 6, 13, 4, 15];
const TICK_COLORS = ["#ff4040", "#ffffff", "#00c800", "#ff4040", "#00c800", "#ff4040", "#00c800"];

function Intraday() {
  const prices = [["29.64", "#ff4040"], ["29.44", "#ff4040"], ["29.24", "#ff4040"], ["29.05", "#ff4040"], ["28.85", "#ffffff"], ["28.65", "#00c800"], ["28.46", "#00c800"], ["28.26", "#00c800"]];
  return (
    <svg className="min-h-[216px] w-full flex-1 overflow-visible" role="img" aria-label="分时走势">
      <g shapeRendering="crispEdges" fill="none" stroke="#8b0000">
        <path d="M0 .5H183.500V206.500M0 69.500H183M0 138.500H183M0 206.500H234M91.500 0V206" stroke="#a00000" />
        <path d="M0 18.500H183M0 35.500H183M0 52.500H183M0 86.500H183M0 103.500H183M0 120.500H183M0 160.500H183M0 183.500H183M45.500 0V206M137.500 0V206" strokeDasharray="1 3" />
      </g>
      <g shapeRendering="crispEdges">
        {TICK_VOLUMES.map((h, i) => (
          <rect key={i} x={i} y={206 - h} width="1" height={h} fill={i > 160 && i % 3 === 0 ? "#ffffff" : h > 20 && i > 90 ? "#00c800" : TICK_COLORS[i < 2 ? i : (i * 5) % 7]} />
        ))}
        <g transform="translate(-8 -24) scale(0.33333)">
          <Line points={INTRADAY} color="#ffffff" />
          <Line points={AVERAGE} color="#ffff00" />
        </g>
      </g>
      <g fontSize="12">
        {prices.map(([p, c], i) => (
          <text key={p} x="186" y={5 + i * 17} fill={c}>{p}</text>
        ))}
        <text x="185" y="142" fill="#c8c800">950</text>
        <text x="185" y="165" fill="#c8c800">634</text>
        <text x="185" y="188" fill="#c8c800">317</text>
      </g>
    </svg>
  );
}

function QuotePanel() {
  return (
    <aside className="flex w-[236px] shrink-0 flex-col border-x border-[#8b0000]">
      <h1 className="flex h-[27px] shrink-0 items-center border-b border-[#8b0000] pb-px pl-[22px] text-[15px]">
        <span className="mb-1 mr-[5px] text-[10px] font-bold leading-none text-[#ff4040]">R</span>
        <span className="mr-[6px] text-[#ffff00]">300983</span>
        <span className="text-[#00ffff]">尤安设计</span>
      </h1>
      <QuoteTable className="" rows={[["委比", "7.79%", R, "委差", "24", R]]} />
      <QuoteTable
        rows={[["卖五", "28.63", G, "", "15", Y], ["卖四", "28.61", G, "", "20", Y], ["卖三", "28.60", G, "", "1", Y], ["卖二", "28.58", G, "", "53", Y], ["卖一", "28.57", G, "", "53", Y]]}
      />
      <QuoteTable
        rows={[["买一", "28.56", G, "", "48", Y], ["买二", "28.52", G, "", "6", Y], ["买三", "28.51", G, "", "59", Y], ["买四", "28.50", G, "", "11", Y], ["买五", "28.37", G, "", "42", Y]]}
      />
      <QuoteTable
        rows={[["现价", "28.57", G, "今开", "28.90", R], ["涨跌", "-0.28", G, "最高", "29.64", R], ["涨幅", "-0.97%", G, "最低", "28.51", G], ["总量", "9111", Y, "量比", "1.06", R], ["外盘", "3696", R, "内盘", "5415", G]]}
      />
      <QuoteTable
        className="pb-[3px]"
        rows={[["换手", "0.77%", W, "股本", "1.73亿", W], ["净资", "16.40", W, "流通", "1.18亿", W], ["收益㈢", "-0.100", W, "PE(动)", <span className="pr-3">--</span>, W]]}
      />
      <h2 className="h-5 shrink-0 pl-px text-xs leading-5 text-[#dcdcdc]">尤安设计</h2>
      <Intraday />
      <div className="flex h-[19px] shrink-0 items-center gap-px pb-px">
        {["笔", "价", "细", "势", "联", "值", "主", "逆", "筹"].map((t) => (
          <button
            key={t}
            type="button"
            className={`h-[17px] flex-1 text-[13px] leading-[17px] ${t === "势" ? "font-bold text-white" : "bg-[#2a2a2d] text-[#a8a8a8]"}`}
          >
            {t}
          </button>
        ))}
      </div>
    </aside>
  );
}

/* ---------- finance column ---------- */

function FinanceTable({ rows, className = "" }) {
  return (
    <div className={`shrink-0 border-b border-[#303030] ${className}`}>
      <table className="w-full table-fixed text-sm leading-[21px]">
        <colgroup>
          <col className="w-[40px]" />
          <col className="w-[67px]" />
          <col className="w-[50px]" />
          <col />
        </colgroup>
        <tbody className="whitespace-nowrap">
          {rows.map((r) => (
            <tr key={r[0]} className="h-[21px]">
              <th scope="row" className="p-0 text-left font-normal text-[#808080]">{r[0]}{r[4] && <sup className="ml-1 text-[9px]">{r[4]}</sup>}</th>
              <td className="p-0 text-right text-[#d0d0d0]">{r[1]}</td>
              <td className="p-0 pl-0.5 text-[#808080]">{r[2]}{r[5] && <sup className="ml-1 text-[9px]">{r[5]}</sup>}</td>
              <td className="p-0 pr-px text-right text-[#d0d0d0]">{r[3]}</td>
            </tr>
          ))}
        </tbody>
      </table>
    </div>
  );
}

function ProfitChart() {
  const bars = [[156, 133, 3], [164, 124, 12], [172, 131, 5, 1], [180, 123, 13, 1], [209, 131, 5], [217, 129, 7], [225, 131, 5], [233, 70, 66], [262, 133, 3], [270, 132, 4], [278, 133, 3]];
  return (
    <svg className="h-[104px] w-full shrink-0" role="img" aria-label="净利润(亿)">
      <g fontSize="12" fill="#d0d0d0">
        {["2.02", "1.51", "1.01", "0.50", "0.00"].map((t, i) => (
          <text key={t} x="39" y={15 + i * 19} textAnchor="end">{t}</text>
        ))}
        <text x="145" y="15">净利润(亿)</text>
        <text x="67" y="100" textAnchor="middle">2023</text>
        <text x="121" y="100" textAnchor="middle">2024</text>
        <text x="174" y="100" textAnchor="middle">2025</text>
      </g>
      <g shapeRendering="crispEdges">
        <path d="M41.500 11V85.500H202" fill="none" stroke="#404040" />
        {bars.map(([x, y, h, loss]) => (
          <rect key={x} x={x - 103} y={y - 52} width="6" height={h} fill={loss ? "#ff3c00" : "#00ff00"} />
        ))}
      </g>
    </svg>
  );
}

function FinancePanel() {
  return (
    <aside className="flex w-[222px] shrink-0 flex-col overflow-hidden bg-black px-[3px] contain-size">
      <div className="flex h-[22px] shrink-0 items-center gap-[6px] pl-[3px] pr-px text-sm text-[#c0c0c0]">
        <span className="mr-auto">300983</span>
        <button type="button" className="text-[#3080ff]">单季</button>
        <button type="button">同季</button>
        <button type="button">财报</button>
        <button type="button">更多..</button>
      </div>
      <ProfitChart />
      <FinanceTable
        className="pb-px"
        rows={[
          ["总收入", "1.21亿", "同比%", "-24.44"], ["净利润", "-1784万", "同比%", "59.23"], ["非经损", "915万", "销售费", "270万"],
          ["货币金i", "4.51亿", "应收款", "1.73亿"], ["未分配", "3.06亿", "预付款", "119万"], ["现金流", "9143万", "应付款", "2977万"],
          ["非流动", "9.97亿", "合同债i", "3606万"], ["财务费", "-654万", "管理费", "4141万"], ["商誉", "--", "质押比i", "--%"],
        ]}
      />
      <button type="button" aria-label="收起" className="-mt-px flex h-[6px] shrink-0 items-center justify-center">
        <svg width="8" height="6"><path d="M1 5l3-4 3 4" fill="none" stroke="#c0c0c0" /></svg>
      </button>
      <FinanceTable
        className="pb-0.5"
        rows={[["PE", "--", "PB", "1.74", "TTM", "MRQ"], ["PEG", "-2.33", "PS", "28.25", "i", "TTM"], ["毛利率", "32.13", "净利率", "-15.16"], ["ROE", "-0.63%", "负债率", "3.19", "③"]]}
      />
      <FinanceTable
        className="pb-0.5 pt-1"
        rows={[["20日i", "-3.4%", "今年来", "6.6%"], ["60日", "8.1%", "Beta值", "1.02"], ["年最高", "33.26", "年最低", "16.00"], ["总市值i", "49.37亿", "流通值i", "33.79亿"]]}
      />
      <div className="shrink-0 border-b border-[#303030] pb-0.5 pt-1">
        <table className="w-full table-fixed text-sm leading-[21px]">
          <tbody className="text-right text-[#d0d0d0]">
            {[["股东", "26-03-31", "26-03-20"], ["户数", "1.05万", "1.07万"], ["较上期", "-1.05%", "-2.37%"]].map((r, i) => (
              <tr key={r[0]} className={`h-[21px] ${i === 0 ? "text-[#ff9000]" : ""}`}>
                <th scope="row" className="w-[52px] p-0 text-left font-normal text-[#808080]">{r[0]}</th>
                <td className="p-0">{r[1]}</td>
                <td className="p-0">{r[2]}</td>
              </tr>
            ))}
          </tbody>
        </table>
      </div>
      <ul className="shrink-0 border-b border-[#303030] pb-[3px] pt-1 text-sm leading-[21px] text-[#d0d0d0]">
        {["1月23日年报预告:大幅减亏", "2025年年报于4月15日披露(窗口...", "2026年一季报于4月28日披露"].map((t) => (
          <li key={t} className="whitespace-nowrap">{t}</li>
        ))}
      </ul>
      <div className="flex shrink-0 gap-[6px] text-sm leading-[23px] text-[#c0c0c0]">
        <span className="mr-auto">明火</span>
        <button type="button">今日</button>
        <button type="button" className="text-[#3080ff]">本周</button>
        <button type="button">本月</button>
        <button type="button">本年</button>
      </div>
    </aside>
  );
}

/* ---------- header ---------- */

function Logo() {
  return (
    <div className="flex items-center gap-[6px] pl-[6px]">
      <svg width="24" height="24" viewBox="0 0 24 24">
        <rect width="24" height="24" fill="#e8e8e8" />
        <rect x="1" y="1" width="22" height="22" fill="#a01c30" />
        <path d="M7 23c3-4 1-7 1-11C8 6 12 1 18 1h5v4c-5-1-8 1-9 5-1 5 0 9-4 13z" fill="#fff" />
        <path d="M3 7C5 3 9 1.500 13 1.500 8 3.500 6 6 5.500 11L3 9z" fill="#fff" />
        <path d="M12 23c4-4 2-9 5-13 1.500-2 3.500-3 6-3" fill="none" stroke="#fff" strokeWidth="1.200" />
      </svg>
      <div className="w-[86px] text-white">
        <div className="flex justify-between text-lg font-semibold italic leading-[18px]">
          <span>中</span><span>原</span><span>证</span><span>券</span>
        </div>
        <div className="whitespace-nowrap font-['Liberation_Serif',serif] text-[6px] font-bold leading-[7px]">CENTRAL CHINA SECURITIES</div>
      </div>
    </div>
  );
}

function Restore({ size = 14, color = "#a8a8a8", stroke = 2 }) {
  return (
    <svg width={size} height={size} viewBox="0 0 14 14" fill="none" stroke={color} strokeWidth={stroke}>
      <path d="M5 1h8v8H5z M9 9v4H1V5h4" />
    </svg>
  );
}

function Header() {
  return (
    <header className="flex h-[30px] shrink-0 items-center bg-linear-to-b from-[#38383c] to-[#404044] text-sm text-[#b4b4b4]">
      <Logo />
      <nav className="ml-[69px] flex flex-1 items-center gap-[25px] whitespace-nowrap">
        {["全景图", "行情", "交易", "资讯", "数据", "发现", "牛股道", "业务办理", "智能客服"].map((t) => (
          <a key={t} href="#" className="leading-5">{t}</a>
        ))}
      </nav>
      <button type="button" className="mr-[23px] text-xs text-white">证券交易未登录</button>
      <button type="button" className="mr-[13px] text-xs font-medium text-[#b0b0b0]">传统交易</button>
      <div className="flex items-center gap-[14px] pr-[6px] text-[#a8a8a8]">
        <button type="button" aria-label="字体" className="flex w-[19px] items-baseline leading-none"><span className="text-[17px]">A</span><span className="text-xs">A</span></button>
        <button type="button" aria-label="布局" className="w-[15px]">
          <svg width="15" height="15" fill="#a8a8a8"><path d="M0 0h6v6H0zM0 8h6v6H0zM8 8h6v6H8z" /><path d="M8.500 .5h5v5h-5z" fill="none" stroke="#a8a8a8" /></svg>
        </button>
        <button type="button" aria-label="公式" className="w-4 font-['Liberation_Serif',serif] text-[19px] italic leading-none">fx</button>
        <button type="button" aria-label="设置"><FaCog size={16} /></button>
        <button type="button" aria-label="皮肤"><FaTshirt size={16} /></button>
        <button type="button" aria-label="后退"><ArrowLeft size={17} strokeWidth={2} /></button>
        <button type="button" aria-label="最小化"><Minus size={17} strokeWidth={2.500} /></button>
        <button type="button" aria-label="还原"><Restore /></button>
        <button type="button" aria-label="关闭"><X size={18} strokeWidth={3} /></button>
      </div>
    </header>
  );
}

/* ---------- footer ---------- */

const strokeIcon = { width: 14, height: 14, viewBox: "0 0 14 14", fill: "none", stroke: "#808084", strokeWidth: 1.2 };

const TRADES = [
  ["买入", <path d="M5.500 1h3v5h2.500L7 10 3 6h2.500zM1 10v3h2M13 10v3h-2" />],
  ["卖出", <path d="M5.500 11V6H3l4-4 4 4H8.500v5zM1 10v3h2M13 10v3h-2" />],
  ["撤单", <path d="M5 13H1V1h11v5M3.500 4h6M3.500 7h3M13 9H8l2-2M8 9l2 2M13 9v4H9" />],
  ["普通持仓", <path d="M1 7l6-5.500L13 7M3 6v7h8V6M5 8h4M5 10.500h4" />],
  ["信用持仓", <path d="M1 7l6-5.500L13 7M3 6v7h8V6M5 8h4M5 10.500h4" />],
  ["帮助", <><circle cx="7" cy="7" r="6.300" /><path d="M5 5.500c0-3 4-2.500 4-.3C9 6.500 7 6.800 7 8.500M7 10v1.300" /></>],
  ["沪深市场", <><path d="M3 1H1v12h2M11 1h2v12h-2" /><circle cx="7" cy="7" r="3.800" /><path d="M7.500 5.500H5.500v3h1.500V7M8 5.500h2M9 5.500v3" /></>],
  ["期权交易", <path d="M4 1H1v12h12V1h-3l-2 1.500H6zM4.500 5L7 7.500 9.500 5M7 7.500V11.500M5 8h4M5 10h4" />],
];

function TradeBar() {
  return (
    <div className="flex h-[22px] shrink-0 items-center overflow-hidden whitespace-nowrap bg-[#1c1c1f] pl-[6px] pt-px text-xs text-[#a8a8a8]">
      <div className="flex w-[647px] shrink-0 items-center gap-4">
        {TRADES.map(([t, icon]) => (
          <button key={t} type="button" className="flex items-center gap-[6px]">
            <svg {...strokeIcon}>{icon}</svg>
            {t}
          </button>
        ))}
      </div>
      <button type="button" aria-label="添加" className="mr-[7px] flex size-[14px] shrink-0 items-center justify-center bg-[#e8e8e8] text-base font-bold leading-none text-[#808080]">+</button>
      <span className="mr-[6px] h-3 w-px shrink-0 bg-[#505050]" />
      <div className="flex min-w-0 flex-1 gap-10 overflow-hidden text-white">
        <a href="#" className="flex w-[177px] shrink-0 justify-end overflow-hidden">明达成协议与否对我而言没有区别</a>
        <a href="#" className="shrink-0">以总理称黎巴嫩曾多次主动接触以方寻求谈判</a>
        <a href="#" className="shrink-0">内塔尼亚胡：伊朗已不再拥有任何铀浓缩能力</a>
      </div>
    </div>
  );
}

function StatusBar() {
  const r = "text-[#ff4040]";
  return (
    <div className="flex h-5 shrink-0 items-center justify-between overflow-hidden whitespace-nowrap bg-[#1e1f24] pl-[153px] pr-[15px] pt-0.5 text-xs text-[#b0b0b0]">
      <div className="flex items-center">
        <span className={`w-[50px] ${r}`}>+0.51%</span>
        <span className="w-[51px]">9557亿</span>
        <span className="w-[27px]">深证</span>
        <span className={`w-[59px] ${r}`}>14309.47</span>
        <span className={`w-[45px] ${r}`}>313.20</span>
        <span className={`w-[47px] ${r}`}>2.24%</span>
        <span className="w-[52px]">13672亿</span>
        <span className="w-[26px]">北证</span>
        <span className={`w-[64px] ${r}`}>1307.67</span>
        <span className={`w-[41px] ${r}`}>21.37</span>
        <span className={`w-[47px] ${r}`}>1.66%</span>
        <span className="w-[55px]">149.0亿</span>
        <span className="w-[52px]">总成交</span>
        <span className="w-[57px]">23378亿</span>
        <RadioTower size={13} strokeWidth={2} className="mr-[6px] text-[#808080]" />
        <span className="mr-1 flex size-[13px] items-center justify-center bg-[#a0a0a0] font-bold text-[#1e1f24]">3</span>
        已连接
      </div>
      <div className="flex items-center gap-4 text-[#77777b]">
        <button type="button" aria-label="声音">
          <svg width="16" height="14"><path d="M0 5h4l5-4v12l-5-4H0z" fill="#a0a0a0" /><path d="M11 4l3-2.500M11.500 7H15M11 10l3 2.500" stroke="#a0a0a0" strokeWidth="1.200" /></svg>
        </button>
        <button type="button" aria-label="键盘"><FaKeyboard size={15} /></button>
        <button type="button" aria-label="监控">
          <svg width="14" height="13"><path d="M0 0h14v10H0zM4 11h6v2H4z" fill="#77777b" /><path d="M2 5h3l1-2 2 4 1-2h3" fill="none" stroke="#1e1f24" /></svg>
        </button>
        <button type="button" aria-label="卫星" className="-scale-x-100"><FaSatelliteDish size={13} /></button>
        <button type="button" aria-label="公告">
          <svg width="14" height="14"><path d="M0 5h14v9H0z" fill="#77777b" /><path d="M2 8h6M2 11h9" stroke="#1e1f24" /><path d="M4 5l3-4 3 4" fill="none" stroke="#77777b" /></svg>
        </button>
      </div>
    </div>
  );
}

export default function App() {
  return (
    <div className="relative flex min-h-screen flex-col overflow-hidden bg-[#0a0a0a] font-['Open_Sans','Noto_Sans_CJK_SC',sans-serif]">
      <Header />
      <main className="flex flex-1 items-stretch">
        <div className="flex min-w-0 flex-1 flex-col">
          <Toolbar />
          <PriceChart />
          <VolumeChart />
          <MacdChart />
          <KdjChart />
          <TimeAxis />
          <IndicatorTabs />
          <LinkBar />
        </div>
        <QuotePanel />
        <FinancePanel />
      </main>
      <TradeBar />
      <StatusBar />

      <div className="absolute bottom-[135px] right-0 z-20 flex h-[30px] items-center gap-2 rounded-l-full bg-[#3a3a40] pl-[10px] pr-[11px] text-sm text-white shadow-md">
        亚太药业 <span className="text-[#3cb878]">7.31</span>
      </div>

      <div className="absolute bottom-0 left-0 z-20 flex h-[25px] w-40 flex-col border-b-4 border-[#d5dce8] bg-[#2b303b]">
        <div className="flex flex-1 items-center pl-[5px] pr-1 text-xs font-bold text-white">
          <span className="flex-1">综合选股</span>
          <button type="button" aria-label="还原窗口" className="mr-2"><Restore size={11} color="#d8b8b8" stroke={1.2} /></button>
          <button type="button" aria-label="关闭窗口"><X size={14} strokeWidth={1.500} color="#d8b8b8" /></button>
        </div>
      </div>
    </div>
  );
}
